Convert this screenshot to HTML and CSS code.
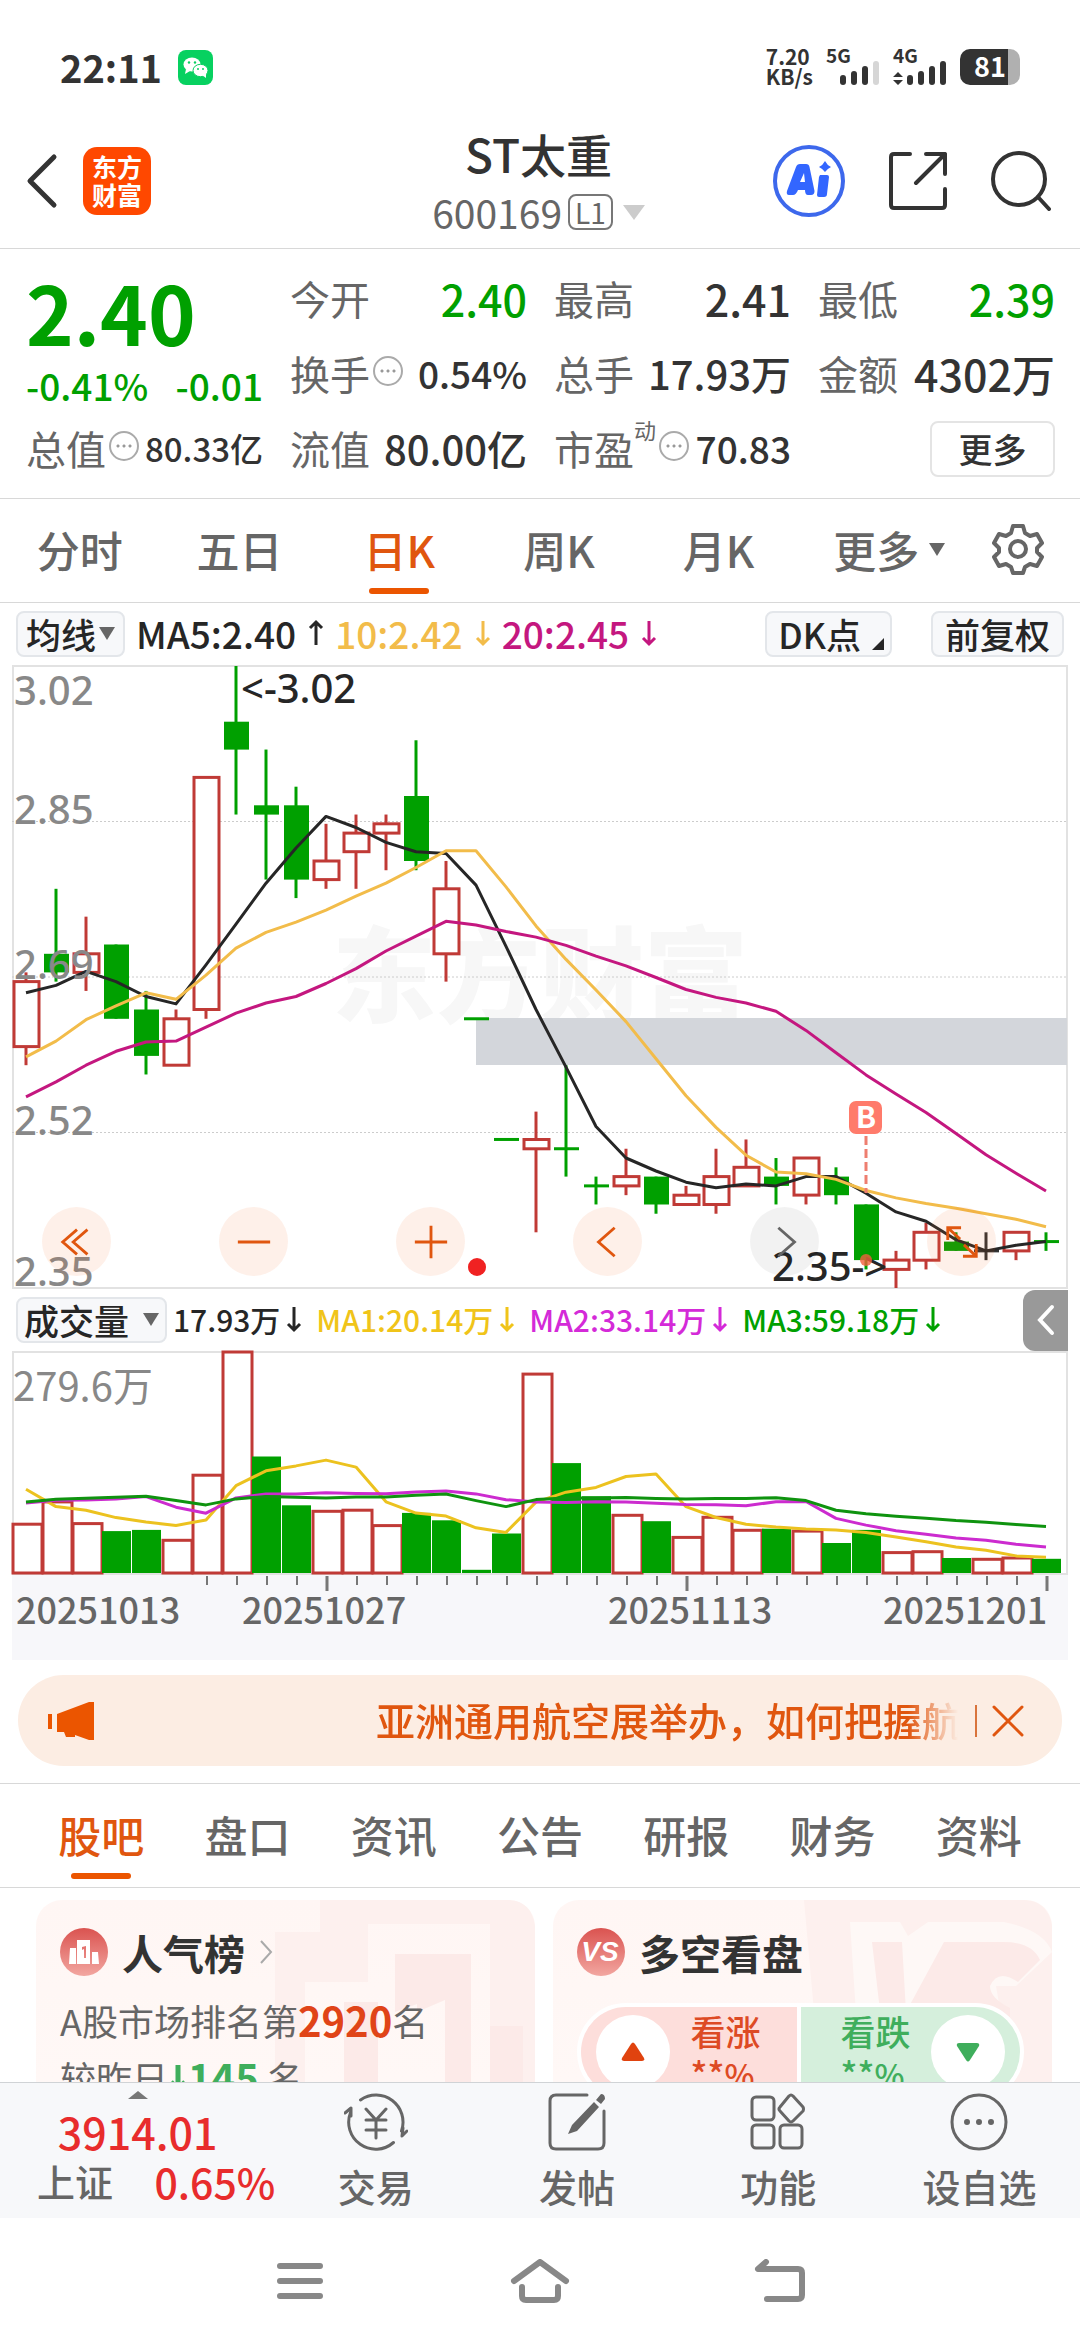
FILE: index.html
```html
<!DOCTYPE html>
<html lang="zh-CN">
<head>
    <meta charset="UTF-8">
    <meta name="viewport" content="width=device-width, initial-scale=1.0">
    <title>ST太重 600169</title>
    <link rel="stylesheet" href="styles.css">
</head>
<body>

    <div class="status-bar">
        <div class="status-left">
            <span class="clock">22:11</span>
            <svg class="wechat" viewBox="0 0 35 35">
                <rect width="35" height="35" rx="8" fill="#07d160"/>
                <ellipse cx="14" cy="14.500" rx="8.500" ry="7" fill="#fff"/>
                <path d="M8 19l-1 5 5-3z" fill="#fff"/>
                <ellipse cx="22.500" cy="20.500" rx="7.500" ry="6.200" fill="#fff" stroke="#07d160"/>
                <path d="M24 25l4 3v-5z" fill="#fff"/>
                <circle cx="11" cy="12.500" r="1.200" fill="#07d160"/>
                <circle cx="17" cy="12.500" r="1.200" fill="#07d160"/>
                <circle cx="20" cy="19" r="1" fill="#07d160"/>
                <circle cx="25" cy="19" r="1" fill="#07d160"/>
            </svg>
        </div>
        <div class="status-right">
            <div class="net-speed"><span>7.20</span><span>KB/s</span></div>
            <div class="signal">
                <span>5G</span>
                <svg viewBox="0 0 54 24" width="54" height="24">
                    <rect x="14" y="14" width="6" height="10" rx="3"/>
                    <rect x="25" y="10" width="6" height="14" rx="3"/>
                    <rect x="36" y="5" width="6" height="19" rx="3"/>
                    <rect x="47" y="0" width="6" height="24" rx="3" fill="#d6d6d6"/>
                </svg>
            </div>
            <div class="signal">
                <span>4G</span>
                <svg viewBox="0 0 54 24" width="54" height="24">
                    <path d="M0 16l5-5 5 5zM0 19l5 5 5-5z"/>
                    <rect x="14" y="14" width="6" height="10" rx="3"/>
                    <rect x="25" y="10" width="6" height="14" rx="3"/>
                    <rect x="36" y="5" width="6" height="19" rx="3"/>
                    <rect x="47" y="0" width="6" height="24" rx="3"/>
                </svg>
            </div>
            <div class="battery"><span>81</span></div>
        </div>
    </div>

    <header class="header">
        <div class="header-left">
            <button class="icon-btn" aria-label="返回">
                <svg viewBox="0 0 32 56" width="32" height="56" fill="none" stroke="#333" stroke-width="5" stroke-linecap="round" stroke-linejoin="round">
                    <path d="M28 4L4 28l24 24"/>
                </svg>
            </button>
            <div class="logo"><span>东方</span><span>财富</span></div>
        </div>
        <div class="stock-title">
            <h1>ST太重</h1>
            <div class="stock-code">600169<span class="level">L1</span><span class="triangle light"></span></div>
        </div>
        <div class="header-right">
            <button class="icon-btn" aria-label="AI">
                <svg viewBox="0 0 72 72" width="72" height="72">
                    <circle cx="36" cy="36" r="34" fill="none" stroke="#3d68ec" stroke-width="4"/>
                    <path fill="#3366ff" fill-rule="evenodd" d="M23 22q1-3 4-3h6q3 0 3.500 3l5 24q0 4-3.500 4h-3q-3 0-3-5h-7q-2 5-5 5h-4q-3 0-2-4zM27 37h5l-1-9z"/>
                    <path fill="#3366ff" d="M47 30h7q2 0 2 2l-2 17q0 3-3 3h-5q-2 0-2-2l2-18zM52 16q2 4 6 6-4 2-6 5-2-3-6-5 4-2 6-6z"/>
                </svg>
            </button>
            <button class="icon-btn" aria-label="分享">
                <svg viewBox="0 0 58 58" width="58" height="58" fill="none" stroke="#333" stroke-width="4" stroke-linecap="round" stroke-linejoin="round">
                    <path d="M21 2H5q-3 0-3 3v48q0 3 3 3h48q3 0 3-3V37M37 2h19v20M56 2L27 31"/>
                </svg>
            </button>
            <button class="icon-btn" aria-label="搜索">
                <svg viewBox="0 0 60 60" width="60" height="60" fill="none" stroke="#333" stroke-width="4" stroke-linecap="round">
                    <circle cx="28" cy="28" r="26"/>
                    <path d="M47 46l11 12"/>
                </svg>
            </button>
        </div>
    </header>

    <section class="quote">
        <div class="price-box">
            <div class="price">2.40</div>
            <div class="change"><span>-0.41%</span><span>-0.01</span></div>
        </div>
        <div class="item"><span>今开</span><b class="big down">2.40</b></div>
        <div class="item"><span>最高</span><b class="big">2.41</b></div>
        <div class="item"><span>最低</span><b class="big down">2.39</b></div>
        <div class="item"><span>换手<i class="more-dot"></i></span><b class="mid">0.54%</b></div>
        <div class="item"><span>总手</span><b>17.93万</b></div>
        <div class="item"><span>金额</span><b class="big">4302万</b></div>
        <div class="item"><span>总值<i class="more-dot"></i></span><b class="small">80.33亿</b></div>
        <div class="item"><span>流值</span><b>80.00亿</b></div>
        <div class="item"><span>市盈<sup>动</sup><i class="more-dot"></i></span><b class="mid">70.83</b></div>
        <div class="item end"><button class="more-btn">更多</button></div>
    </section>

    <nav class="period-tabs">
        <button>分时</button>
        <button>五日</button>
        <button class="active">日K</button>
        <button>周K</button>
        <button>月K</button>
        <button>更多<span class="triangle"></span></button>
        <button aria-label="设置">
            <svg viewBox="0 0 52 52" width="52" height="52" fill="none" stroke="#666" stroke-width="4" stroke-linejoin="round">
                <path d="M21 3h10l2 7 5 3 7-2 5 9-5 5v4l5 5-5 9-7-2-5 3-2 6H21l-2-6-5-3-7 2-5-9 5-5v-4l-5-5 5-9 7 2 5-3z"/>
                <circle cx="26" cy="26" r="8"/>
            </svg>
        </button>
    </nav>

    <div class="ma-bar">
        <button class="chip">均线<span class="triangle"></span></button>
        <span class="ma">MA5:2.40<svg class="arrow" viewBox="0 0 16 28"><path d="M8 26V3M2 9l6-6 6 6"/></svg></span>
        <span class="ma yellow">10:2.42<svg class="arrow" viewBox="0 0 16 28"><path d="M8 2v23M2 19l6 6 6-6"/></svg></span>
        <span class="ma pink">20:2.45<svg class="arrow" viewBox="0 0 16 28"><path d="M8 2v23M2 19l6 6 6-6"/></svg></span>
        <button class="chip dk">DK点<span class="corner"></span></button>
        <button class="chip wide">前复权</button>
    </div>

    <div class="chart">
        <svg id="kline" viewBox="0 0 1056 624"></svg>
        <div class="chart-tools">
            <button aria-label="最前"><svg viewBox="0 0 40 40"><path d="M20 7L5 20l15 13M31 7L16 20l15 13"/></svg></button>
            <button aria-label="缩小"><svg viewBox="0 0 40 40"><path d="M3 20h34"/></svg></button>
            <button aria-label="放大"><svg viewBox="0 0 40 40"><path d="M3 20h34M20 3v34"/></svg></button>
            <button aria-label="左移"><svg viewBox="0 0 40 40"><path d="M27 5L10 20l17 15"/></svg></button>
            <button class="grey" aria-label="右移"><svg viewBox="0 0 40 40"><path d="M13 5l17 15-17 15"/></svg></button>
            <button aria-label="全屏"><svg viewBox="0 0 40 40"><path d="M5 18V5h14M5 5l13 12M35 22v13H21M35 35L22 23"/></svg></button>
        </div>
    </div>

    <div class="vol-bar">
        <button class="chip">成交量<span class="triangle"></span></button>
        <span class="vol">17.93万<svg class="arrow" viewBox="0 0 16 28"><path d="M8 2v23M2 19l6 6 6-6"/></svg></span>
        <span class="vol gold">MA1:20.14万<svg class="arrow" viewBox="0 0 16 28"><path d="M8 2v23M2 19l6 6 6-6"/></svg></span>
        <span class="vol purple">MA2:33.14万<svg class="arrow" viewBox="0 0 16 28"><path d="M8 2v23M2 19l6 6 6-6"/></svg></span>
        <span class="vol down">MA3:59.18万<svg class="arrow" viewBox="0 0 16 28"><path d="M8 2v23M2 19l6 6 6-6"/></svg></span>
        <button class="drawer" aria-label="展开">
            <svg viewBox="0 0 20 32" width="20" height="32" fill="none" stroke="#fff" stroke-width="4" stroke-linecap="round"><path d="M16 3L4 16l12 13"/></svg>
        </button>
    </div>

    <div class="chart">
        <svg id="volume" viewBox="0 0 1056 309"></svg>
    </div>

    <div class="notice">
        <svg viewBox="0 0 46 40" width="46" height="40" fill="#eb5500">
            <path d="M0 13h4v15H0zM9 13L41 1h5v38h-5l-14-5v2h-9l-2-5H9z"/>
        </svg>
        <p>亚洲通用航空展举办，如何把握航空机会</p>
        <button class="close" aria-label="关闭">
            <svg viewBox="0 0 32 32" width="32" height="32" fill="none" stroke="#e0560f" stroke-width="3" stroke-linecap="round"><path d="M2 2l28 28M30 2L2 30"/></svg>
        </button>
    </div>

    <nav class="info-tabs">
        <button class="active">股吧</button>
        <button>盘口</button>
        <button>资讯</button>
        <button>公告</button>
        <button>研报</button>
        <button>财务</button>
        <button>资料</button>
    </nav>

    <main class="cards">
        <section class="card">
            <svg class="card-bg" viewBox="0 0 260 200">
                <path fill="#fdf0ee" d="M45 0h190q20 0 25 25v175h-45V24h-122v58H30v118H0V32h45z"/>
                <path fill="#fceae8" d="M120 54h76v146h-26V100l-28 12v-8l-22 8zM69 102h34v98H69zM215 126h33v74h-33z"/>
            </svg>
            <h2>
                <svg viewBox="0 0 48 48" width="48" height="48">
                    <defs><linearGradient id="red" x2="0" y2="1"><stop offset="0" stop-color="#da5350"/><stop offset="1" stop-color="#f2a6a0"/></linearGradient></defs>
                    <circle cx="24" cy="24" r="24" fill="url(#red)"/>
                    <path fill="#fff" fill-rule="evenodd" d="M10 20h6v16h-7zM17 12h13v24H17zM32 24h6l1 12h-7zM22 19v3l2-1v9h2V18z"/>
                </svg>
                人气榜
                <svg viewBox="0 0 14 24" width="14" height="24" fill="none" stroke="#aaa" stroke-width="2"><path d="M2 1l10 11L2 23"/></svg>
            </h2>
            <p>A股市场排名第<b class="hot">2920</b>名</p>
            <p>较昨日<svg class="drop" viewBox="0 0 20 30"><path d="M10 2v24M3 19l7 7 7-7"/></svg><b class="cool">145</b> 名</p>
        </section>
        <section class="card">
            <svg class="card-bg" viewBox="0 0 260 200">
                <path fill="#fdf0ee" d="M12 0h220q22 0 28 24v176H30z"/>
                <path fill="#fef8f6" d="M58 22h50l8 14 20-14h76q40 8 48 30l-36 34h-20l10 58H66z"/>
                <path fill="#fceae8" d="M80 42h30l4 70 38-70h60q28 0 36 18l-22 22q-20-14-28 4 0 12 20 22v20H90z"/>
            </svg>
            <h2>
                <svg viewBox="0 0 48 48" width="48" height="48">
                    <circle cx="24" cy="24" r="24" fill="url(#red)"/>
                    <text class="vs" x="23" y="33">VS</text>
                </svg>
                多空看盘
            </h2>
            <div class="vote">
                <button class="up">
                    <span class="round"><svg viewBox="0 0 24 20" width="24" height="20"><path fill="#e0430f" d="M10 2q2-3 4 0l9 14q1 3-2 3H3q-3 0-2-3z"/></svg></span>
                    <span class="vote-text">看涨<em>**<i>%</i></em></span>
                </button>
                <button class="fall">
                    <span class="vote-text">看跌<em>**<i>%</i></em></span>
                    <span class="round"><svg viewBox="0 0 24 20" width="24" height="20"><path fill="#3fae5c" d="M10 18q2 3 4 0l9-14q1-3-2-3H3Q0 1 1 4z"/></svg></span>
                </button>
            </div>
        </section>
    </main>

    <footer class="bottom-bar">
        <a class="index-box" href="#">
            <span class="triangle-up"></span>
            <span class="index-num">3914.01</span>
            <span class="index-row">上证<b>0.65%</b></span>
        </a>
        <a class="action" href="#">
            <svg viewBox="0 0 64 60">
                <path d="M16.500 8a27 27 0 0 1 41 31M59 36l-1 8 5-5M49.500 50.500A27 27 0 0 1 6.500 20.500M1 21l6-5v8M22 17l10 11 10-11M22 28h20M22 38h20M32 28v18"/>
            </svg>
            交易
        </a>
        <a class="action" href="#">
            <svg viewBox="0 0 64 60">
                <path d="M42 3H11q-6 0-6 6v42q0 6 6 6h42q6 0 6-6V19"/>
                <path fill="#666" stroke="none" d="M49 10l5 5-22 24-9 3 4-9zM51 8l5-6q4 0 4 5l-4 5z"/>
            </svg>
            发帖
        </a>
        <a class="action" href="#">
            <svg viewBox="0 0 64 60">
                <rect x="6" y="5" width="22" height="23" rx="4"/><rect x="6" y="33" width="22" height="23" rx="4"/><rect x="34" y="33" width="22" height="23" rx="4"/>
                <path d="M43 4q2-2 4 0l10 11q1 2 0 4l-10 10q-2 2-4 0l-9-10q-2-2 0-4z"/>
            </svg>
            功能
        </a>
        <a class="action" href="#">
            <svg viewBox="0 0 64 60">
                <circle cx="32" cy="30" r="27"/>
                <path class="dots" d="M20 30h0M32 30h0M44 30h0"/>
            </svg>
            设自选
        </a>
    </footer>

    <div class="sys-nav">
        <button aria-label="菜单"><svg viewBox="0 0 60 44"><path d="M10 7h40M10 22h40M10 37h40"/></svg></button>
        <button aria-label="主页"><svg viewBox="0 0 60 44"><path d="M4 22L30 3l26 19M12 28v9q0 4 4 4h28q4 0 4-4v-9"/></svg></button>
        <button aria-label="后退"><svg viewBox="0 0 60 44"><path d="M16 3L8 10h40q4 0 4 4v22q0 4-4 4H17"/></svg></button>
    </div>

    <script src="chart.js"></script>
</body>
</html>
```
FILE: chart.js
```js
// [open, high, low, close, volume]
const days = [
    [2.61, 2.69, 2.59, 2.68, 61.7], [2.71, 2.78, 2.68, 2.69, 90], [2.69, 2.75, 2.67, 2.71, 62.5],
    [2.72, 2.72, 2.64, 2.64, 53], [2.65, 2.67, 2.58, 2.60, 54.5], [2.59, 2.65, 2.59, 2.64, 41.4],
    [2.65, 2.90, 2.64, 2.90, 123.7], [2.96, 3.02, 2.86, 2.93, 279.6], [2.87, 2.93, 2.79, 2.86, 147.4],
    [2.87, 2.89, 2.77, 2.79, 85.7], [2.79, 2.85, 2.78, 2.81, 78], [2.82, 2.86, 2.78, 2.84, 79.4],
    [2.84, 2.86, 2.80, 2.85, 60], [2.88, 2.94, 2.80, 2.81, 76], [2.71, 2.81, 2.68, 2.78, 66.7],
    [2.64, 2.64, 2.64, 2.64, 4], [2.51, 2.51, 2.51, 2.51, 50], [2.50, 2.54, 2.41, 2.51, 251.7],
    [2.50, 2.59, 2.47, 2.50, 139], [2.46, 2.47, 2.44, 2.46, 97], [2.46, 2.50, 2.45, 2.47, 73],
    [2.47, 2.47, 2.43, 2.44, 65.5], [2.44, 2.46, 2.44, 2.45, 45], [2.44, 2.50, 2.43, 2.47, 70.5],
    [2.46, 2.51, 2.46, 2.48, 54], [2.47, 2.49, 2.44, 2.46, 56], [2.45, 2.49, 2.44, 2.49, 53],
    [2.47, 2.48, 2.44, 2.45, 38], [2.44, 2.44, 2.37, 2.38, 54.5], [2.37, 2.39, 2.35, 2.38, 25.8],
    [2.38, 2.42, 2.37, 2.41, 27], [2.40, 2.41, 2.39, 2.39, 19], [2.39, 2.41, 2.38, 2.39, 17.3],
    [2.39, 2.41, 2.38, 2.41, 19], [2.40, 2.41, 2.39, 2.40, 17.93]
];

// averages of the first days, which need history older than the chart
const priceHead = {
    5: [2.668, 2.676, 2.691, 2.680],
    10: [2.599, 2.616, 2.639, 2.654, 2.668, 2.661, 2.687, 2.716, 2.733],
    20: [2.556, 2.572, 2.590, 2.605, 2.615, 2.616, 2.631, 2.646, 2.657, 2.664, 2.678, 2.694, 2.713, 2.729, 2.745, 2.741, 2.734, 2.728, 2.719]
};
const volHead = {
    5: [106, 84, 79.4, 70.1],
    10: [88.7, 92, 92.5, 93.8, 96.7, 83.2, 75.6, 95, 100],
    20: [90, 93.3, 94.6, 95.9, 97.1, 91.6, 86.1, 93.8, 96.7, 95.9, 95, 96.3, 96.3, 98.4, 100, 91.6, 84, 92.9, 95]
};

const RED = "#c03a36";
const GREEN = "#00a000";
const STEP = 30;
const x = i => 14 + i * STEP;
const priceY = p => 1 + (3.02 - p) / 0.67 * 622;
const volY = v => 222 - v / 279.6 * 221;

function average(col, n, head) {
    return days.map((d, i) => {
        if (i < n - 1) return head[n][i];
        return days.slice(i - n + 1, i + 1).reduce((s, r) => s + r[col], 0) / n;
    });
}

function line(values, scale, color) {
    const points = values.map((v, i) => x(i) + "," + scale(v).toFixed(1)).join(" ");
    return `<polyline points="${points}" fill="none" stroke="${color}" stroke-width="3" stroke-linejoin="round"/>`;
}

function box(left, top, width, height, hollow) {
    if (hollow) {
        return `<rect x="${left}" y="${top.toFixed(1)}" width="${width}" height="${height.toFixed(1)}" fill="#fff" stroke="${RED}" stroke-width="3"/>`;
    }
    return `<rect x="${left}" y="${top.toFixed(1)}" width="${width}" height="${height.toFixed(1)}" fill="${GREEN}"/>`;
}

function drawKline() {
    let s = `<text class="watermark" x="528" y="350">东方财富</text>`;
    s += `<path d="M1 0V623H1055V1H0" fill="none" stroke="#e2e2e2" stroke-width="2"/>`;
    [156.500, 312, 467.500].forEach(y => {
        s += `<path d="M0 ${y}H1056" stroke="#ccc" stroke-dasharray="2 2"/>`;
    });
    s += `<rect x="464" y="353" width="591" height="47" fill="#d3d6db"/>`;

    days.forEach(([open, high, low, close], i) => {
        const flat = open === close;
        const color = i === 32 ? "#333" : close > open ? RED : GREEN;
        s += `<path d="M${x(i)} ${priceY(high)}V${priceY(low)}" stroke="${color}" stroke-width="3"/>`;
        if (flat) {
            s += `<path d="M${x(i) - 12} ${priceY(open)}h25" stroke="${color}" stroke-width="3"/>`;
        } else {
            const top = priceY(Math.max(open, close));
            s += box(x(i) - 12, top, 25, priceY(Math.min(open, close)) - top, close > open);
        }
    });

    s += line(average(3, 5, priceHead), priceY, "#262626");
    s += line(average(3, 10, priceHead), priceY, "#f2bc4a");
    s += line(average(3, 20, priceHead), priceY, "#c4177f");

    [["3.02", 40], ["2.85", 159], ["2.69", 314], ["2.52", 470], ["2.35", 621]].forEach(([t, y]) => {
        s += `<text class="scale" x="2" y="${y}">${t}</text>`;
    });
    s += `<text class="mark" x="229" y="38">&lt;-3.02</text>`;
    s += `<text class="mark" x="760" y="616">2.35-&gt;</text>`;

    // buy point
    s += `<path d="M854 471V528" stroke="#ee7e70" stroke-width="3" stroke-dasharray="9 4"/>`;
    s += `<rect x="837" y="436" width="33" height="33" rx="7" fill="#ff7b6b"/>`;
    s += `<text class="buy" x="854" y="463">B</text>`;
    s += `<circle cx="854" cy="595" r="6" fill="#f2603c" opacity="0.800"/>`;
    s += `<circle cx="465" cy="602" r="9" fill="#f02222"/>`;
    document.getElementById("kline").innerHTML = s;
}

function drawVolume() {
    let s = `<rect x="0" y="224" width="1056" height="85" fill="#f7f7fa"/>`;
    s += `<path d="M1 0V223H1055V1H0" fill="none" stroke="#e2e2e2" stroke-width="2"/>`;
    days.forEach((d, i) => {
        const rising = i === 0 || d[3] >= days[i - 1][3];
        const left = rising ? x(i) - 13 : x(i) - 14;
        s += box(left, volY(d[4]), 29, 222 - volY(d[4]), rising);
    });
    s += line(average(4, 5, volHead), volY, "#ecc21f");
    s += line(average(4, 10, volHead), volY, "#cc2bcf");
    s += line(average(4, 20, volHead), volY, "#0f930f");

    for (let i = 6; i < days.length; i++) {
        const main = i === 10 || i === 22 || i === 34;
        s += `<path d="M${x(i) + 1} 225v${main ? 15 : 9}" stroke="#777" stroke-width="${main ? 3 : 2}"/>`;
    }
    s += `<text class="volmax" x="1" y="50">279.6万</text>`;
    [["20251013", 4], ["20251027", 230], ["20251113", 596], ["20251201", 871]].forEach(([t, left]) => {
        s += `<text class="date" x="${left}" y="273">${t}</text>`;
    });
    document.getElementById("volume").innerHTML = s;
}

drawKline();
drawVolume();
```
FILE: styles.css
```css
* {
    box-sizing: border-box;
}

body {
    margin: 0;
    height: 100vh;
    display: flex;
    flex-direction: column;
    background: #fff;
    color: #333;
    font-family: "Noto Sans CJK SC", "Noto Sans", sans-serif;
    font-weight: 500;
}

button {
    margin: 0;
    padding: 0;
    border: none;
    background: none;
    color: inherit;
    font: inherit;
    white-space: nowrap;
    cursor: pointer;
}

a {
    color: inherit;
    text-decoration: none;
}

svg {
    display: block;
    flex-shrink: 0;
}

.status-bar {
    display: flex;
    justify-content: space-between;
    align-items: center;
    height: 124px;
    padding: 10px 60px 0;
    flex-shrink: 0;
}

.status-left,
.status-right {
    display: flex;
    align-items: center;
    gap: 16px;
}

.clock {
    font-size: 38px;
    font-weight: 700;
    line-height: 40px;
}

.wechat {
    width: 35px;
    height: 35px;
}

.status-right {
    gap: 13px;
    font-weight: 700;
}

.net-speed {
    display: flex;
    flex-direction: column;
    font-size: 21px;
    line-height: 20px;
    padding-bottom: 2px;
}

.signal {
    position: relative;
    width: 54px;
    height: 36px;
    padding-top: 12px;
    fill: #333;
}

.signal span {
    position: absolute;
    left: 0;
    top: -4px;
    font-size: 19px;
    line-height: 20px;
}

.battery {
    width: 60px;
    height: 36px;
    border-radius: 10px;
    background: linear-gradient(90deg, #333 80%, #b0b0b0 80%);
    color: #fff;
    font-size: 27px;
    line-height: 34px;
    text-align: center;
}

.header {
    display: grid;
    grid-template-columns: 1fr auto 1fr;
    align-items: center;
    height: 125px;
    padding: 0 29px 6px 26px;
    border-bottom: 1px solid #d8d8d8;
    flex-shrink: 0;
}

.header-left,
.header-right {
    display: flex;
    align-items: center;
    padding-bottom: 4px;
}

.header-left {
    gap: 25px;
}

.header-right {
    justify-content: flex-end;
    gap: 44px;
}

.logo {
    display: flex;
    flex-direction: column;
    justify-content: center;
    width: 68px;
    height: 68px;
    padding-bottom: 2px;
    border-radius: 14px;
    background: #ff4800;
    color: #fff;
    font-size: 25px;
    font-weight: 700;
    line-height: 28px;
    text-align: center;
}

.stock-title {
    text-align: center;
}

h1 {
    margin: 0;
    font-size: 46px;
    font-weight: 500;
    line-height: 58px;
}

.stock-code {
    display: flex;
    align-items: center;
    justify-content: center;
    color: #666;
    font-size: 39px;
    font-weight: 400;
    line-height: 60px;
}

.level {
    margin-left: 6px;
    padding: 0 5px;
    border: 2px solid #777;
    border-radius: 8px;
    font-size: 28px;
    line-height: 32px;
}

.triangle {
    display: inline-block;
    border: 8px solid transparent;
    border-top: 13px solid #666;
    border-bottom: none;
}

.triangle.light {
    margin-left: 10px;
    border-width: 15px 11px 0;
    border-top-color: #ccc;
}

.quote {
    display: grid;
    grid-template-columns: repeat(4, 1fr);
    grid-template-rows: repeat(3, 75px);
    column-gap: 27px;
    padding: 12px 25px 12px 26px;
    border-bottom: 1px solid #d8d8d8;
    flex-shrink: 0;
}

.price-box {
    grid-row: span 2;
    color: #00a000;
}

.price {
    font-size: 81px;
    font-weight: 700;
    line-height: 100px;
}

.change {
    display: flex;
    justify-content: space-between;
    font-size: 37px;
    line-height: 48px;
}

.item {
    display: flex;
    align-items: center;
    justify-content: space-between;
    font-size: 40px;
    line-height: 75px;
    white-space: nowrap;
}

.item span {
    display: flex;
    align-items: center;
    color: #666;
    font-weight: 400;
}

.item b {
    font-weight: 500;
}

.item .big {
    font-size: 43px;
}

.item .mid {
    font-size: 37px;
}

.item .small {
    font-size: 33px;
}

.item sup {
    align-self: flex-start;
    font-size: 22px;
    line-height: 36px;
}

.item.end {
    justify-content: flex-end;
}

.down {
    color: #00a000;
}

.more-dot {
    width: 30px;
    height: 30px;
    margin: 0 0 6px 3px;
    border: 2px solid #aaa;
    border-radius: 50%;
    background: radial-gradient(circle, #999 1px, transparent 2px) center / 6px 6px no-repeat,
        radial-gradient(circle, #999 1px, transparent 2px) 4px center / 6px 6px no-repeat,
        radial-gradient(circle, #999 1px, transparent 2px) 16px center / 6px 6px no-repeat;
}

.more-btn {
    width: 125px;
    height: 56px;
    border: 2px solid #e4e4e4;
    border-radius: 8px;
    font-size: 34px;
    line-height: 50px;
}

.period-tabs {
    display: grid;
    grid-template-columns: repeat(5, 160fr) 182fr 76fr;
    height: 104px;
    padding: 0 24px 3px 0;
    border-bottom: 1px solid #d8d8d8;
    color: #666;
    font-size: 43px;
    flex-shrink: 0;
}

.period-tabs button,
.info-tabs button {
    position: relative;
    display: flex;
    align-items: center;
    justify-content: center;
    gap: 10px;
}

.period-tabs .active,
.info-tabs .active {
    color: #e0560f;
}

.period-tabs .active::after,
.info-tabs .active::after {
    content: "";
    position: absolute;
    left: calc(50% - 30px);
    bottom: 5px;
    width: 60px;
    height: 6px;
    border-radius: 3px;
    background: #eb5500;
}

.ma-bar,
.vol-bar {
    display: flex;
    align-items: center;
    height: 62px;
    padding: 0 16px;
    color: #262626;
    flex-shrink: 0;
}

.ma-bar {
    gap: 11px;
}

.chip {
    position: relative;
    display: flex;
    align-items: center;
    gap: 3px;
    height: 46px;
    padding: 0 8px 1px;
    border: 2px solid #e3e6ea;
    border-radius: 8px;
    background: #f7f8fa;
    font-size: 35px;
    line-height: 40px;
}

.wide {
    padding: 0 12px 1px;
}

.dk {
    margin-left: auto;
    margin-right: 28px;
    padding: 0 29px 1px 11px;
}

.corner {
    position: absolute;
    right: 6px;
    bottom: 5px;
    border-bottom: 12px solid #262626;
    border-left: 12px solid transparent;
}

.ma,
.vol {
    display: flex;
    align-items: center;
    gap: 12px;
    padding-bottom: 2px;
    font-size: 37px;
    line-height: 50px;
    white-space: nowrap;
}

.arrow {
    width: 16px;
    height: 28px;
    fill: none;
    stroke: currentColor;
    stroke-width: 3px;
}

.yellow {
    color: #f2bc4a;
}

.pink {
    color: #c4177f;
}

.chart {
    position: relative;
    margin: 0 12px;
    flex-shrink: 0;
}

.chart > svg {
    width: 100%;
    height: auto;
    overflow: visible;
}

.watermark {
    fill: #f7f7f7;
    font-size: 104px;
    font-weight: 900;
    text-anchor: middle;
}

.scale,
.mark {
    fill: #888;
    font-family: "Noto Sans", sans-serif;
    font-size: 40px;
}

.mark {
    fill: #262626;
}

.buy {
    fill: #fff;
    font-size: 30px;
    font-weight: 700;
    text-anchor: middle;
}

.volmax {
    fill: #888;
    font-size: 40px;
    font-weight: 400;
}

.date {
    fill: #666;
    font-size: 36px;
}

.chart-tools {
    position: absolute;
    left: 30px;
    right: 72px;
    bottom: 13px;
    display: flex;
    justify-content: space-between;
}

.chart-tools button {
    display: flex;
    align-items: center;
    justify-content: center;
    width: 69px;
    height: 69px;
    border-radius: 50%;
    background: rgba(250, 110, 40, 0.1);
}

.chart-tools svg {
    width: 38px;
    height: 38px;
    fill: none;
    stroke: #e0560f;
    stroke-width: 3px;
}

.chart-tools .grey {
    background: rgba(0, 0, 0, 0.05);
}

.chart-tools .grey svg {
    stroke: #666;
}

.vol-bar {
    gap: 6px;
    padding-right: 12px;
}

.vol-bar .chip {
    gap: 14px;
    padding: 0 6px 1px;
}

.vol {
    gap: 6px;
    font-size: 30px;
}

.vol .arrow {
    margin-right: 8px;
}

.gold {
    color: #f0c419;
}

.purple {
    color: #d42ad8;
}

.drawer {
    display: flex;
    align-items: center;
    justify-content: center;
    width: 45px;
    height: 61px;
    margin-left: auto;
    border-radius: 12px 0 0 12px;
    background: #999;
}

.notice {
    display: flex;
    align-items: center;
    height: 91px;
    margin: 15px 18px 17px;
    padding: 0 38px 0 30px;
    border-radius: 46px;
    background: #fcede3;
    color: #e0560f;
    flex-shrink: 0;
}

.notice p {
    flex: 1;
    margin: 0 17px 0 282px;
    padding-bottom: 4px;
    overflow: hidden;
    font-size: 39px;
    line-height: 60px;
    white-space: nowrap;
    mask-image: linear-gradient(90deg, #000 calc(100% - 50px), transparent);
}

.close {
    padding-left: 15px;
    border-left: 2px solid #d9743c;
}

.info-tabs {
    display: grid;
    grid-template-columns: repeat(7, 1fr);
    height: 105px;
    padding: 0 28px 3px;
    border-top: 1px solid #d8d8d8;
    border-bottom: 1px solid #d8d8d8;
    color: #666;
    font-size: 43px;
    flex-shrink: 0;
}

.cards {
    flex: 1;
    display: grid;
    grid-template-columns: 1fr 1fr;
    gap: 18px;
    min-height: 0;
    padding: 12px 28px 0 36px;
    overflow: hidden;
}

.card {
    position: relative;
    height: 360px;
    padding: 28px 24px;
    border-radius: 26px;
    background: linear-gradient(180deg, #fff6f4, #fffaf8);
    overflow: hidden;
}

.card > * {
    position: relative;
}

.card .card-bg {
    position: absolute;
    right: 0;
    top: 0;
    width: 260px;
    height: 200px;
}

.card h2 {
    display: flex;
    align-items: center;
    gap: 14px;
    margin: 0 0 16px;
    font-size: 41px;
    font-weight: 700;
    line-height: 48px;
}

.vs {
    fill: #fff;
    font-family: "Liberation Sans", sans-serif;
    font-size: 28px;
    font-style: italic;
    font-weight: 700;
    text-anchor: middle;
}

.card p {
    display: flex;
    align-items: center;
    height: 57px;
    margin: 0;
    color: #666;
    font-size: 36px;
    font-weight: 400;
    line-height: 57px;
    white-space: pre;
}

.card p b {
    font-size: 40px;
}

.hot {
    color: #e04418;
}

.cool {
    color: #3fae5c;
}

.drop {
    width: 20px;
    height: 30px;
    fill: none;
    stroke: #3fae5c;
    stroke-width: 5px;
}

.vote {
    display: flex;
    gap: 4px;
    height: 98px;
    margin: 27px 4px 0 0;
    border: 4px solid #fff;
    border-radius: 49px;
    background: #fff;
    overflow: hidden;
}

.vote button {
    display: flex;
    align-items: center;
    justify-content: space-between;
    flex: 1;
    padding: 0 36px 0 15px;
    background: #fddedb;
    color: #dd4a24;
}

.vote .fall {
    padding: 0 15px 0 40px;
    background: #d5efdc;
    color: #3fae5c;
}

.round {
    display: flex;
    align-items: center;
    justify-content: center;
    width: 74px;
    height: 74px;
    border-radius: 50%;
    background: #fff;
}

.vote-text {
    font-size: 35px;
    line-height: 42px;
    text-align: left;
}

.vote-text em {
    display: block;
    font-style: normal;
}

.vote-text i {
    font-size: 32px;
    font-style: normal;
}

.bottom-bar {
    display: grid;
    grid-template-columns: 275fr repeat(4, 201fr);
    height: 136px;
    border-top: 1px solid #d0d3d6;
    background: #f7f8fa;
    color: #666;
    font-size: 38px;
    flex-shrink: 0;
}

.index-box {
    display: flex;
    flex-direction: column;
    align-items: center;
    padding-top: 8px;
}

.triangle-up {
    border: 10px solid transparent;
    border-top: none;
    border-bottom: 8px solid #777;
}

.index-num {
    color: #e82c2c;
    font-size: 43px;
    line-height: 64px;
}

.index-row {
    display: flex;
    align-self: stretch;
    justify-content: space-between;
    align-items: center;
    padding-left: 37px;
    line-height: 36px;
}

.index-row b {
    color: #e82c2c;
    font-size: 41px;
    font-weight: 500;
}

.action {
    display: flex;
    flex-direction: column;
    align-items: center;
    gap: 7px;
    padding-top: 9px;
    line-height: 54px;
}

.action svg {
    width: 64px;
    height: 60px;
    fill: none;
    stroke: #666;
    stroke-width: 3px;
    stroke-linecap: round;
    stroke-linejoin: round;
}

.action .dots {
    stroke-width: 6px;
}

.sys-nav {
    display: flex;
    justify-content: center;
    gap: 180px;
    height: 126px;
    flex-shrink: 0;
}

.sys-nav svg {
    width: 60px;
    height: 44px;
    fill: none;
    stroke: #888;
    stroke-width: 6px;
    stroke-linecap: round;
    stroke-linejoin: round;
}
```
